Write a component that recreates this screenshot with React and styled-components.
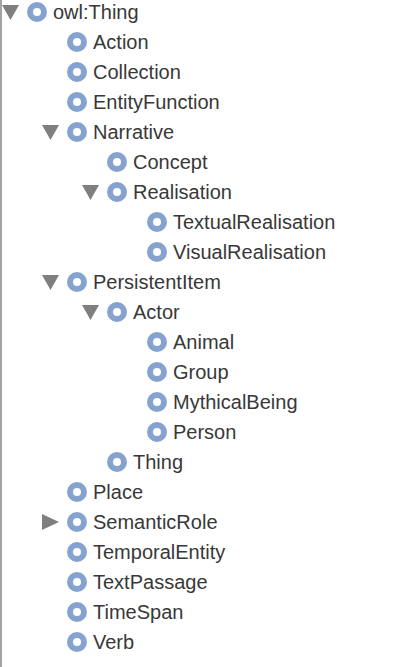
import styled, { createGlobalStyle } from "styled-components"

const GlobalStyle = createGlobalStyle`
  html, body {
    margin: 0;
    padding: 0;
    background: #ffffff;
  }
  body {
    font-family: "Liberation Sans", Arial, sans-serif;
  }
`

const Panel = styled.div`
  height: 667px;
  border-left: 2px solid #a3a3a3;
  box-sizing: border-box;
  overflow: hidden;
`

const List = styled.ul`
  list-style: none;
  margin: 0;
  padding: 0;
`

const Row = styled.li`
  display: flex;
  align-items: center;
  height: 30px;
  padding-left: ${props => props.level * 40}px;
  margin-top: ${props => (props.first ? "-3px" : "0")};
`

const Toggle = styled.span`
  width: 22px;
  height: 20px;
  margin-right: 3px;
  display: flex;
  align-items: center;
  justify-content: flex-start;
`

const Dot = styled.span`
  width: 20px;
  height: 20px;
  border-radius: 50%;
  box-sizing: border-box;
  border: 6px solid #86a3cf;
  background: #ffffff;
  flex-shrink: 0;
`

const Label = styled.span`
  margin-left: 6px;
  font-size: 20px;
  color: #383838;
  white-space: nowrap;
`

const tree = [
  { name: "owl:Thing", open: true, children: [
    { name: "Action" },
    { name: "Collection" },
    { name: "EntityFunction" },
    { name: "Narrative", open: true, children: [
      { name: "Concept" },
      { name: "Realisation", open: true, children: [
        { name: "TextualRealisation" },
        { name: "VisualRealisation" },
      ]},
    ]},
    { name: "PersistentItem", open: true, children: [
      { name: "Actor", open: true, children: [
        { name: "Animal" },
        { name: "Group" },
        { name: "MythicalBeing" },
        { name: "Person" },
      ]},
      { name: "Thing" },
    ]},
    { name: "Place" },
    { name: "SemanticRole", open: false, children: [{ name: "hidden" }] },
    { name: "TemporalEntity" },
    { name: "TextPassage" },
    { name: "TimeSpan" },
    { name: "Verb" },
  ]},
]

const Arrow = ({ open }) =>
  open ? (
    <svg width="17" height="16" viewBox="0 0 17 16">
      <polygon points="0,1 17,1 8.5,16" fill="#7f7f7f" />
    </svg>
  ) : (
    <svg width="17" height="16" viewBox="0 0 17 16">
      <polygon points="0,0 17,8 0,16" fill="#7f7f7f" />
    </svg>
  )

const flatten = (nodes, level, out) => {
  nodes.forEach(node => {
    out.push({ ...node, level })
    if (node.children && node.open) flatten(node.children, level + 1, out)
  })
  return out
}

const App = () => {
  const rows = flatten(tree, 0, [])
  return (
    <>
      <GlobalStyle />
      <Panel>
        <List>
          {rows.map((row, i) => (
            <Row key={row.name} level={row.level} first={i === 0}>
              <Toggle>{row.children && <Arrow open={row.open} />}</Toggle>
              <Dot />
              <Label>{row.name}</Label>
            </Row>
          ))}
        </List>
      </Panel>
    </>
  )
}

export default App
